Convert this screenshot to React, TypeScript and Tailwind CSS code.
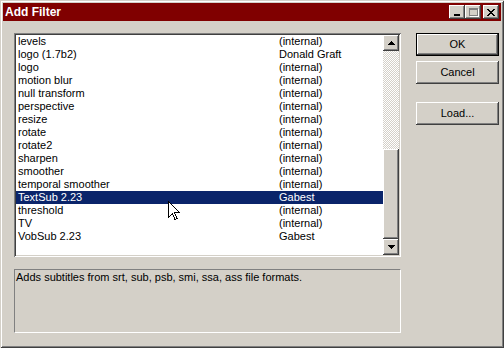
import React from 'react';

const filters: [string, string][] = [
  ['levels', '(internal)'],
  ['logo (1.7b2)', 'Donald Graft'],
  ['logo', '(internal)'],
  ['motion blur', '(internal)'],
  ['null transform', '(internal)'],
  ['perspective', '(internal)'],
  ['resize', '(internal)'],
  ['rotate', '(internal)'],
  ['rotate2', '(internal)'],
  ['sharpen', '(internal)'],
  ['smoother', '(internal)'],
  ['temporal smoother', '(internal)'],
  ['TextSub 2.23', 'Gabest'],
  ['threshold', '(internal)'],
  ['TV', '(internal)'],
  ['VobSub 2.23', 'Gabest'],
];

const raised =
  'bg-[#d4d0c8] shadow-[inset_-1px_-1px_#404040,inset_1px_1px_#ffffff,inset_-2px_-2px_#808080,inset_2px_2px_#d4d0c8]';

const Arrow: React.FC<{ down?: boolean }> = ({ down }) => (
  <svg width="7" height="4" viewBox="0 0 7 4" className={down ? 'rotate-180' : ''}>
    <path d="M3 0h1v1h1v1h1v1h1v1H0V3h1V2h1V1h1z" fill="#000" />
  </svg>
);

const TitleButton: React.FC<{ children: React.ReactNode; className?: string }> = ({ children, className }) => (
  <div className={`w-4 h-[14px] flex items-center justify-center ${raised} ${className ?? ''}`}>{children}</div>
);

const DialogButton: React.FC<{ label: string; isDefault?: boolean; className?: string }> = ({ label, isDefault, className }) => (
  <div
    className={`w-[83px] h-[23px] flex items-center justify-center text-[11px] text-black ${raised} ${
      isDefault ? 'border border-black' : ''
    } ${className ?? ''}`}
  >
    {label}
  </div>
);

const App: React.FC = () => {
  return (
    <div
      className="relative w-[504px] h-[348px] bg-[#d4d0c8] p-[3px] flex flex-col shadow-[inset_1px_1px_#d4d0c8,inset_-1px_-1px_#404040,inset_2px_2px_#ffffff,inset_-2px_-2px_#808080] overflow-hidden"
      style={{ fontFamily: '"Liberation Sans", Arial, sans-serif' }}
    >
      {/* title bar */}
      <div className="h-[18px] bg-[#800000] flex items-center pl-[2px] pr-[2px]">
        <span className="text-white font-bold text-[12px] leading-none">Add Filter</span>
        <div className="ml-auto flex items-center">
          <TitleButton>
            <div className="w-[6px] h-[2px] bg-black mt-[6px] -ml-[1px]" />
          </TitleButton>
          <TitleButton>
            <div className="w-[9px] h-[8px] border border-[#808080] border-t-2 shadow-[1px_1px_#ffffff]" />
          </TitleButton>
          <TitleButton className="ml-[2px]">
            <svg width="8" height="7" viewBox="0 0 8 7">
              <path d="M0 0l7 7M1 0l7 7M7 0L0 7M8 0L1 7" stroke="#000" strokeWidth="1" shapeRendering="crispEdges" />
            </svg>
          </TitleButton>
        </div>
      </div>

      {/* body */}
      <div className="flex pl-[11px] pt-[12px] gap-[15px]">
        <div className="flex flex-col gap-[12px]">
          {/* list box */}
          <div className="w-[387px] h-[224px] bg-white p-[2px] flex shadow-[inset_1px_1px_#808080,inset_-1px_-1px_#ffffff,inset_2px_2px_#404040,inset_-2px_-2px_#d4d0c8]">
            <div className="flex-1 text-[11px] leading-[13px] text-black">
              {filters.map(([name, author], i) => {
                const selected = i === 12;
                return (
                  <div
                    key={i}
                    className={`h-[13px] flex pl-[2px] ${selected ? 'bg-[#0a246a] text-white' : ''}`}
                  >
                    <span className="w-[261px]">{name}</span>
                    <span>{author}</span>
                  </div>
                );
              })}
            </div>
            {/* scrollbar */}
            <div className="w-4 flex flex-col">
              <div className={`h-4 flex items-center justify-center ${raised}`}>
                <Arrow />
              </div>
              <div className="h-[98px] bg-[repeating-conic-gradient(#d4d0c8_0_25%,#ffffff_0_50%)] bg-[length:2px_2px]" />
              <div className={`flex-1 ${raised}`} />
              <div className={`h-4 flex items-center justify-center ${raised}`}>
                <Arrow down />
              </div>
            </div>
          </div>

          {/* description */}
          <div className="w-[387px] h-[64px] border border-t-[#808080] border-l-[#808080] border-r-white border-b-white text-[11px] leading-[13px] text-black pl-[1px] pt-[1px]">
            Adds subtitles from srt, sub, psb, smi, ssa, ass file formats.
          </div>
        </div>

        <div className="flex flex-col">
          <DialogButton label="OK" isDefault />
          <DialogButton label="Cancel" className="mt-[5px]" />
          <DialogButton label="Load..." className="mt-[18px]" />
        </div>
      </div>

      {/* mouse cursor */}
      <svg className="absolute left-[168px] top-[201px]" width="12" height="19" viewBox="0 0 12 19">
        <path
          d="M0.5 0.5V16.5L4.5 12.5L7 18.5L9 17.5L6.5 11.5H11.5Z"
          fill="#fff"
          stroke="#000"
          strokeWidth="1"
          shapeRendering="crispEdges"
        />
      </svg>
    </div>
  );
};

export default App;
